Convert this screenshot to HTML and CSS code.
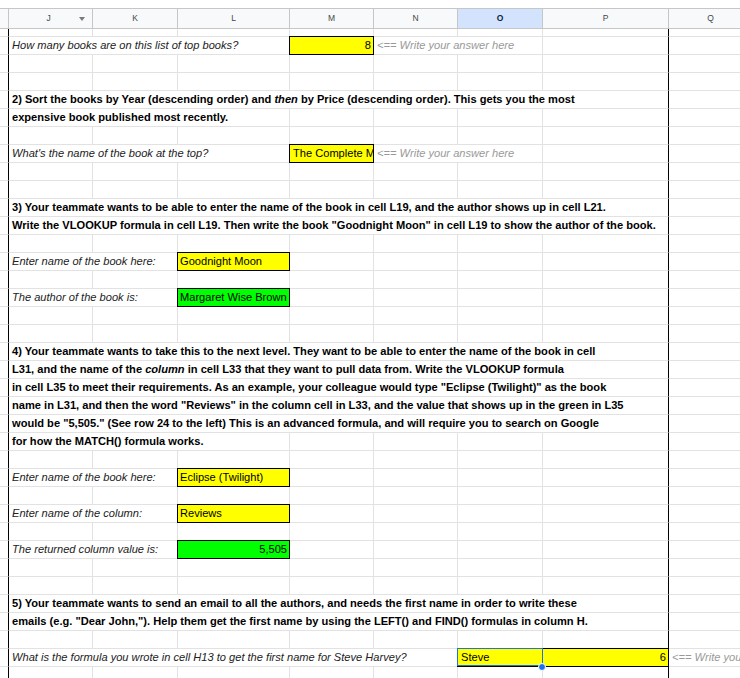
FILE: index.html
```html
<!DOCTYPE html>
<html lang="en">
<head>
<meta charset="utf-8">
<title>Sheet</title>
<link rel="stylesheet" href="styles.css">
</head>
<body>
<div class="topband"></div>
<div class="sheet">
  <div class="row hdr">
    <div class="c stub"></div>
    <div class="c colj"><span class="hl">J</span><span class="arrow"></span></div>
    <div class="c">K</div>
    <div class="c">L</div>
    <div class="c">M</div>
    <div class="c">N</div>
    <div class="c active">O</div>
    <div class="c">P</div>
    <div class="c">Q</div>
    <div class="c"></div>
  </div>
  <div class="row part">
    <div class="c stub"></div><div class="c"></div><div class="c"></div><div class="c"></div><div class="c"></div><div class="c"></div><div class="c"></div><div class="c edge"></div><div class="c"></div>
  </div>

  <div class="row">
    <div class="c stub"></div>
    <div class="c s3 i">How many books are on this list of top books?</div>
    <div class="c yellow boxed r"><span class="t">8</span></div>
    <div class="c s2 hint">&lt;== Write your answer here</div>
    <div class="c edge"></div>
    <div class="c"></div>
  </div>
  <div class="row"><div class="c stub"></div><div class="c"></div><div class="c"></div><div class="c"></div><div class="c"></div><div class="c"></div><div class="c"></div><div class="c edge"></div><div class="c"></div></div>
  <div class="row"><div class="c stub"></div><div class="c"></div><div class="c"></div><div class="c"></div><div class="c"></div><div class="c"></div><div class="c"></div><div class="c edge"></div><div class="c"></div></div>
  <div class="row">
    <div class="c stub"></div>
    <div class="c s7 b edge">2) Sort the books by Year (descending order) and <em>then</em> by Price (descending order). This gets you the most</div>
    <div class="c"></div>
  </div>
  <div class="row">
    <div class="c stub"></div>
    <div class="c s3 b">expensive book published most recently.</div>
    <div class="c"></div><div class="c"></div><div class="c"></div><div class="c edge"></div><div class="c"></div>
  </div>
  <div class="row"><div class="c stub"></div><div class="c"></div><div class="c"></div><div class="c"></div><div class="c"></div><div class="c"></div><div class="c"></div><div class="c edge"></div><div class="c"></div></div>
  <div class="row">
    <div class="c stub"></div>
    <div class="c s3 i">What's the name of the book at the top?</div>
    <div class="c yellow boxed wide"><span class="t">The Complete M</span></div>
    <div class="c s2 hint">&lt;== Write your answer here</div>
    <div class="c edge"></div>
    <div class="c"></div>
  </div>
  <div class="row"><div class="c stub"></div><div class="c"></div><div class="c"></div><div class="c"></div><div class="c"></div><div class="c"></div><div class="c"></div><div class="c edge"></div><div class="c"></div></div>
  <div class="row"><div class="c stub"></div><div class="c"></div><div class="c"></div><div class="c"></div><div class="c"></div><div class="c"></div><div class="c"></div><div class="c edge"></div><div class="c"></div></div>
  <div class="row">
    <div class="c stub"></div>
    <div class="c s7 b edge">3) Your teammate wants to be able to enter the name of the book in cell L19, and the author shows up in cell L21.</div>
    <div class="c"></div>
  </div>
  <div class="row">
    <div class="c stub"></div>
    <div class="c s7 b edge">Write the VLOOKUP formula in cell L19. Then write the book "Goodnight Moon" in cell L19 to show the author of the book.</div>
    <div class="c"></div>
  </div>
  <div class="row"><div class="c stub"></div><div class="c"></div><div class="c"></div><div class="c"></div><div class="c"></div><div class="c"></div><div class="c"></div><div class="c edge"></div><div class="c"></div></div>
  <div class="row">
    <div class="c stub"></div>
    <div class="c s2 i">Enter name of the book here:</div>
    <div class="c yellow boxed"><span class="t">Goodnight Moon</span></div>
    <div class="c"></div><div class="c"></div><div class="c"></div><div class="c edge"></div><div class="c"></div>
  </div>
  <div class="row"><div class="c stub"></div><div class="c"></div><div class="c"></div><div class="c"></div><div class="c"></div><div class="c"></div><div class="c"></div><div class="c edge"></div><div class="c"></div></div>
  <div class="row">
    <div class="c stub"></div>
    <div class="c s2 i">The author of the book is:</div>
    <div class="c green boxed"><span class="t">Margaret Wise Brown</span></div>
    <div class="c"></div><div class="c"></div><div class="c"></div><div class="c edge"></div><div class="c"></div>
  </div>
  <div class="row"><div class="c stub"></div><div class="c"></div><div class="c"></div><div class="c"></div><div class="c"></div><div class="c"></div><div class="c"></div><div class="c edge"></div><div class="c"></div></div>
  <div class="row"><div class="c stub"></div><div class="c"></div><div class="c"></div><div class="c"></div><div class="c"></div><div class="c"></div><div class="c"></div><div class="c edge"></div><div class="c"></div></div>
  <div class="row">
    <div class="c stub"></div>
    <div class="c s7 b edge">4) Your teammate wants to take this to the next level. They want to be able to enter the name of the book in cell</div>
    <div class="c"></div>
  </div>
  <div class="row">
    <div class="c stub"></div>
    <div class="c s7 b edge">L31, and the name of the <em>column</em> in cell L33 that they want to pull data from. Write the VLOOKUP formula</div>
    <div class="c"></div>
  </div>
  <div class="row">
    <div class="c stub"></div>
    <div class="c s7 b edge">in cell L35 to meet their requirements. As an example, your colleague would type "Eclipse (Twilight)" as the book</div>
    <div class="c"></div>
  </div>
  <div class="row">
    <div class="c stub"></div>
    <div class="c s7 b edge">name in L31, and then the word "Reviews" in the column cell in L33, and the value that shows up in the green in L35</div>
    <div class="c"></div>
  </div>
  <div class="row">
    <div class="c stub"></div>
    <div class="c s7 b edge">would be "5,505." (See row 24 to the left) This is an advanced formula, and will require you to search on Google</div>
    <div class="c"></div>
  </div>
  <div class="row">
    <div class="c stub"></div>
    <div class="c s3 b">for how the MATCH() formula works.</div>
    <div class="c"></div><div class="c"></div><div class="c"></div><div class="c edge"></div><div class="c"></div>
  </div>
  <div class="row"><div class="c stub"></div><div class="c"></div><div class="c"></div><div class="c"></div><div class="c"></div><div class="c"></div><div class="c"></div><div class="c edge"></div><div class="c"></div></div>
  <div class="row">
    <div class="c stub"></div>
    <div class="c s2 i">Enter name of the book here:</div>
    <div class="c yellow boxed"><span class="t">Eclipse (Twilight)</span></div>
    <div class="c"></div><div class="c"></div><div class="c"></div><div class="c edge"></div><div class="c"></div>
  </div>
  <div class="row"><div class="c stub"></div><div class="c"></div><div class="c"></div><div class="c"></div><div class="c"></div><div class="c"></div><div class="c"></div><div class="c edge"></div><div class="c"></div></div>
  <div class="row">
    <div class="c stub"></div>
    <div class="c s2 i">Enter name of the column:</div>
    <div class="c yellow boxed"><span class="t">Reviews</span></div>
    <div class="c"></div><div class="c"></div><div class="c"></div><div class="c edge"></div><div class="c"></div>
  </div>
  <div class="row"><div class="c stub"></div><div class="c"></div><div class="c"></div><div class="c"></div><div class="c"></div><div class="c"></div><div class="c"></div><div class="c edge"></div><div class="c"></div></div>
  <div class="row">
    <div class="c stub"></div>
    <div class="c s2 i">The returned column value is:</div>
    <div class="c green boxed r"><span class="t">5,505</span></div>
    <div class="c"></div><div class="c"></div><div class="c"></div><div class="c edge"></div><div class="c"></div>
  </div>
  <div class="row"><div class="c stub"></div><div class="c"></div><div class="c"></div><div class="c"></div><div class="c"></div><div class="c"></div><div class="c"></div><div class="c edge"></div><div class="c"></div></div>
  <div class="row"><div class="c stub"></div><div class="c"></div><div class="c"></div><div class="c"></div><div class="c"></div><div class="c"></div><div class="c"></div><div class="c edge"></div><div class="c"></div></div>
  <div class="row">
    <div class="c stub"></div>
    <div class="c s7 b edge">5) Your teammate wants to send an email to all the authors, and needs the first name in order to write these</div>
    <div class="c"></div>
  </div>
  <div class="row">
    <div class="c stub"></div>
    <div class="c s7 b edge">emails (e.g. "Dear John,"). Help them get the first name by using the LEFT() and FIND() formulas in column H.</div>
    <div class="c"></div>
  </div>
  <div class="row"><div class="c stub"></div><div class="c"></div><div class="c"></div><div class="c"></div><div class="c"></div><div class="c"></div><div class="c"></div><div class="c edge"></div><div class="c"></div></div>
  <div class="row">
    <div class="c stub"></div>
    <div class="c s5 i">What is the formula you wrote in cell H13 to get the first name for Steve Harvey?</div>
    <div class="c yellow box-l sel"><span class="t">Steve</span><span class="handle"></span></div>
    <div class="c yellow box-r edge r"><span class="t">6</span></div>
    <div class="c hint">&lt;== Write your answer here</div>
  </div>
  <div class="row part2"><div class="c stub"></div><div class="c"></div><div class="c"></div><div class="c"></div><div class="c"></div><div class="c"></div><div class="c"></div><div class="c edge"></div><div class="c"></div></div>
</div>
</body>
</html>
```

FILE: styles.css
```css
html, body {
  margin: 0;
  padding: 0;
  background: #fff;
  overflow: hidden;
}
body {
  width: 740px;
  height: 678px;
  font-family: "Liberation Sans", Arial, sans-serif;
  font-size: 11.1px;
  color: #000;
}
.topband {
  height: 8px;
  background: #fff;
}
.sheet {
  width: 840px;
}
.row {
  display: grid;
  grid-template-columns: 9px 84px 85px 112px 84px 84px 85px 126px 84px 85px;
  height: 18px;
}
.c {
  box-sizing: border-box;
  border-right: 1px solid #e2e2e2;
  border-bottom: 1px solid #e2e2e2;
  padding: 0 3px;
  line-height: 17px;
  white-space: nowrap;
  overflow: hidden;
  min-width: 0;
  position: relative;
}
.s2 { grid-column: span 2; }
.s3 { grid-column: span 3; }
.s5 { grid-column: span 5; }
.s7 { grid-column: span 7; }
.stub {
  padding: 0;
  border-right-color: #000;
}
.edge { border-right-color: #000; }
.r { text-align: right; padding-right: 2px; }
.i { font-style: italic; color: #222; }
.b { font-weight: bold; }
.b em { font-style: italic; }
.hint { font-style: italic; color: #999; overflow: visible; }

/* header */
.hdr {
  height: 21px;
  border-top: 1px solid #c4c7c5;
  box-sizing: border-box;
}
.hdr .c {
  background: #f8f9fa;
  border-right-color: #c4c7c5;
  border-bottom-color: #c4c7c5;
  text-align: center;
  font-size: 8.5px;
  line-height: 19px;
  color: #444746;
  padding: 0;
}
.hdr .stub { border-right-color: #c4c7c5; }
.hdr .active {
  background: #d3e3fd;
  color: #0b1f3f;
  font-weight: bold;
}
.colj .hl { position: relative; left: -2px; }
.arrow {
  position: absolute;
  left: 70px;
  top: 8px;
  width: 0;
  height: 0;
  border-left: 3px solid transparent;
  border-right: 3px solid transparent;
  border-top: 4px solid #7a7a7a;
}
.part { height: 8px; }
.part2 { height: 12px; }

/* filled cells */
.yellow { background: #ffff00; }
.green { background: #00ff00; }
.boxed, .box-l, .box-r { overflow: visible; }
.boxed { padding: 0 1px 0 2px; }
.boxed.r { padding: 0 2px 0 2px; }
.boxed.wide { padding-left: 3px; padding-right: 0; }
.t {
  display: block;
  overflow: hidden;
  white-space: nowrap;
}
.boxed::after,
.box-l::after,
.box-r::after {
  content: "";
  position: absolute;
  left: -1px;
  top: -1px;
  right: -1px;
  bottom: -1px;
  border: 1px solid #000;
  pointer-events: none;
  z-index: 1;
}
.box-l::after { border-right: none; }
.box-r::after { border-left: none; }
.sel::before {
  content: "";
  position: absolute;
  left: -1px;
  top: -1px;
  right: -1px;
  bottom: 0;
  border: 1px solid #1a73e8;
  z-index: 2;
}
.handle {
  position: absolute;
  right: -4px;
  bottom: -5px;
  width: 6px;
  height: 6px;
  border-radius: 50%;
  background: #1a73e8;
  border: 1px solid #fff;
  z-index: 3;
}
```
